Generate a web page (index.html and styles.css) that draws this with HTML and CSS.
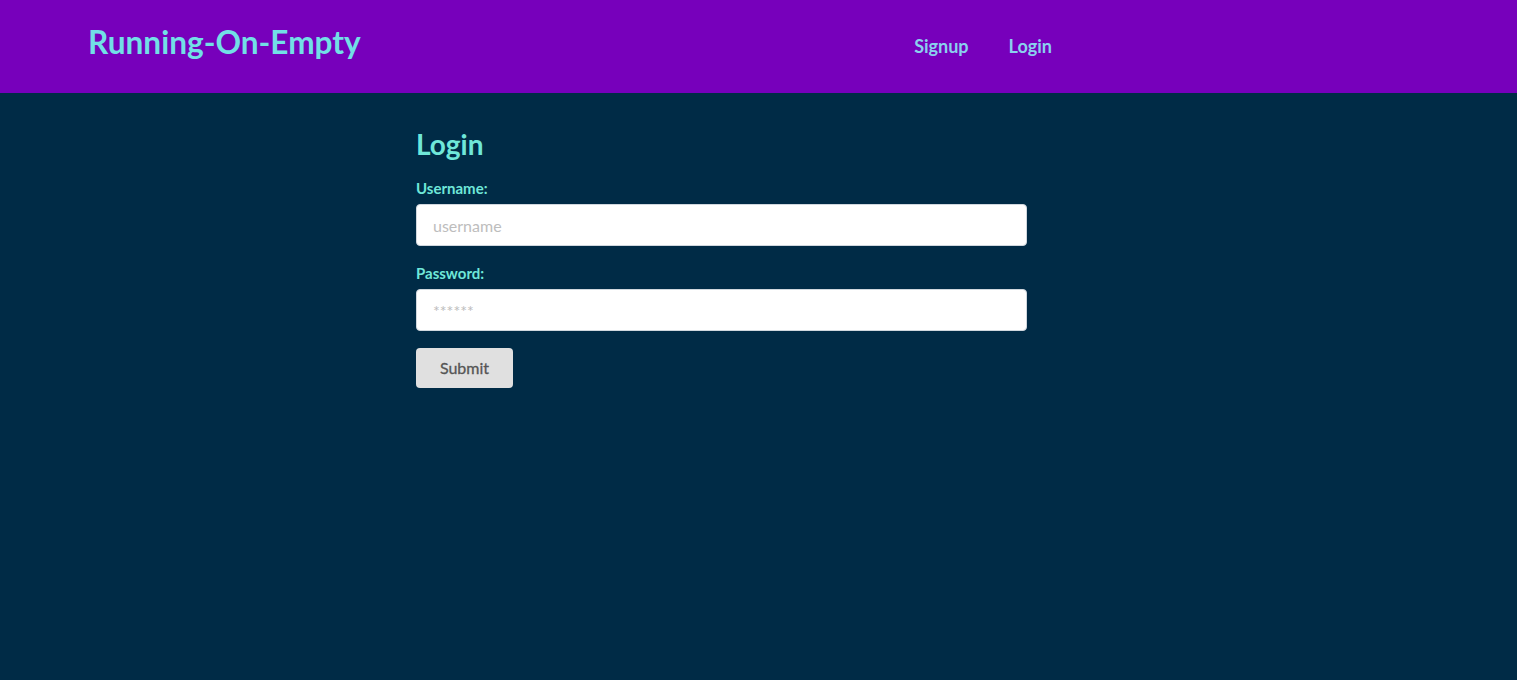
FILE: index.html
```html
<!DOCTYPE html>
<html>
<head>
<meta charset="utf-8">
<link rel="stylesheet" href="styles.css">
<title>Running-On-Empty</title>
</head>
<body>
<header class="topbar">
  <a class="brand" href="#">Running-On-Empty</a>
  <nav class="nav">
    <a href="#" class="nav-link">Signup</a>
    <a href="#" class="nav-link">Login</a>
  </nav>
</header>
<main class="page">
  <form class="login-form">
    <h2 class="form-title">Login</h2>
    <label class="field-label" for="u">Username:</label>
    <input class="field-input" id="u" type="text" placeholder="username">
    <label class="field-label" for="p">Password:</label>
    <input class="field-input" id="p" type="password" placeholder="******">
    <button class="submit-btn" type="button">Submit</button>
  </form>
</main>
</body>
</html>
```
FILE: styles.css
```css
* { box-sizing: border-box; }
html, body { margin: 0; padding: 0; }
body {
  background: #002b46;
  font-family: Lato, "Open Sans", sans-serif;
  min-height: 680px;
}
.topbar {
  background: #7700bb;
  height: 93px;
  display: flex;
  align-items: center;
  padding-left: 88px;
}
.brand {
  color: #72dfe6;
  font-size: 31.6px;
  font-weight: 700;
  text-decoration: none;
  margin-top: -10px;
}
.nav {
  margin-left: auto;
  margin-right: 465px;
  margin-top: -2px;
  display: flex;
  gap: 40px;
}
.nav-link {
  color: #8ad0ee;
  font-size: 18px;
  font-weight: 700;
  text-decoration: none;
}
.page {
  padding-left: 416px;
  padding-top: 35px;
}
.login-form {
  width: 611px;
  display: flex;
  flex-direction: column;
  align-items: flex-start;
}
.form-title {
  color: #6fe7d9;
  font-size: 28px;
  font-weight: 700;
  margin: 0 0 17px;
  line-height: 1.2;
}
.field-label {
  color: #6fe7d9;
  font-size: 15px;
  font-weight: 700;
  line-height: 18px;
  margin-bottom: 7px;
}
.field-input {
  width: 100%;
  height: 42px;
  border: 1px solid #d0d7de;
  border-radius: 4px;
  background: #fff;
  padding: 2px 16px 0;
  font-family: Lato, sans-serif;
  font-size: 16px;
  margin: 0 0 18px;
}
.field-input::placeholder { color: #bdbdbd; }
.submit-btn {
  margin-top: -1px;
  width: 97px;
  height: 40px;
  border: none;
  border-radius: 4px;
  background: #e0e0e0;
  color: #555;
  font-family: Lato, sans-serif;
  font-size: 16px;
  font-weight: 400;
  -webkit-text-stroke: 0.3px #555;
}
```
